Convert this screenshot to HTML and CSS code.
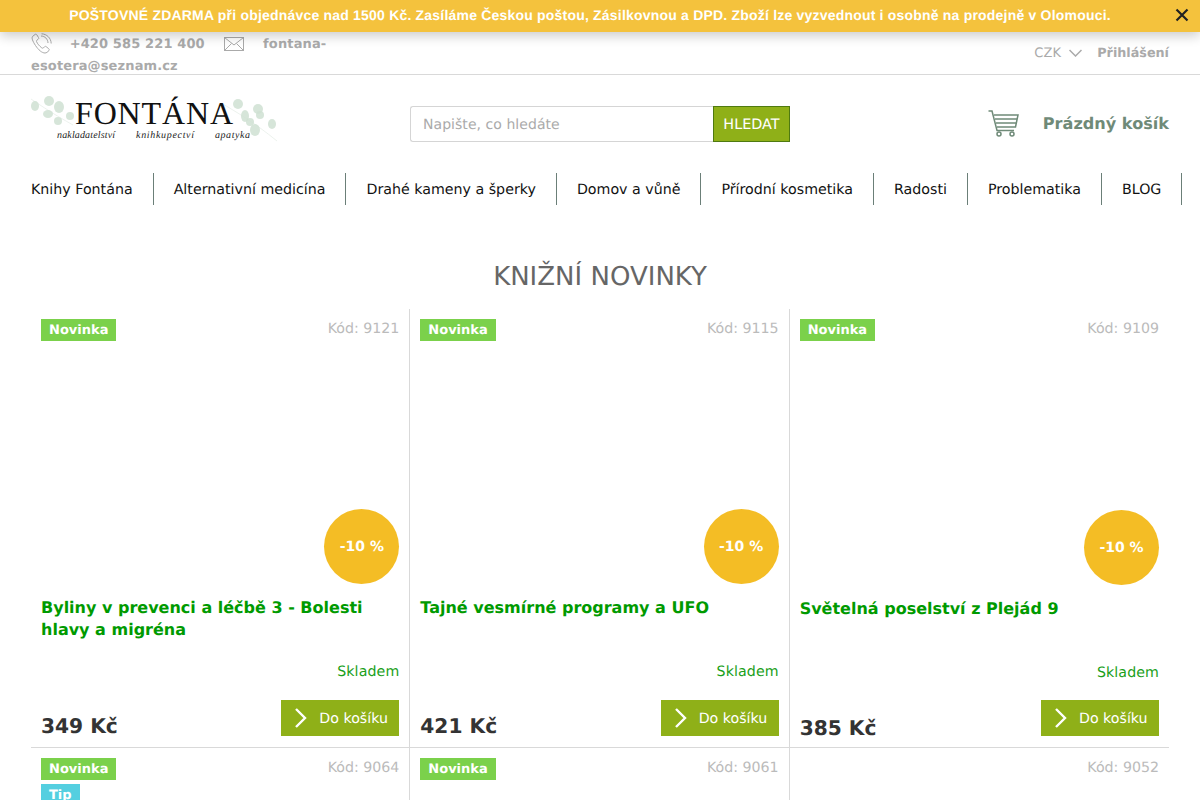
FILE: index.html
```html
<!DOCTYPE html>
<html lang="cs">
<head>
<meta charset="utf-8">
<title>Fontána</title>
<link rel="stylesheet" href="styles.css">
</head>
<body>
<div class="banner">
  <span class="banner-text">POŠTOVNÉ ZDARMA při objednávce nad 1500 Kč. Zasíláme Českou poštou, Zásilkovnou a DPD. Zboží lze vyzvednout i osobně na prodejně v Olomouci.</span>
  <svg class="banner-close" width="14" height="14" viewBox="0 0 14 14"><path d="M1.500 1.500l11 11M12.500 1.500l-11 11" stroke="#222" stroke-width="2.200" fill="none"/></svg>
</div>
<div class="topbar">
  <div class="contact">
    <svg class="ico-phone" width="21" height="21" viewBox="0 0 21 21" fill="none" stroke="#aaa" stroke-width="1"><path d="M4 1.500L1.500 3.500C.5 5 1.500 8 4.500 12.500C7.500 17 11 20 14 20c1.500 0 2.500-1 4-2.500.5-.7.3-1.300-.3-1.800l-2.500-2c-.7-.5-1.200-.4-1.800.2l-1 1c-.5.4-1 .4-1.600 0-2.500-2-4.300-4-5.300-6.400-.2-.6 0-1 .5-1.400l1.200-.9c.6-.5.7-1 .3-1.700L5.800 1.800C5.300 1.100 4.700 1 4 1.500z"/><path d="M10 3c4 .2 6.800 3 7 7M10.500 .8c5.300.2 9.500 4.200 9.700 9.700"/></svg>
    <span class="phone">+420 585 221 400</span>
    <svg class="ico-mail" width="20" height="14" viewBox="0 0 20 14" fill="none" stroke="#aaa" stroke-width="1"><rect x=".5" y=".5" width="19" height="13"/><path d="M.5.500L10 8l9.500-7.500M.5 13.500L7.500 6.500M19.500 13.500L12.500 6.500"/></svg>
    <span class="mail">fontana-</span><span class="mail">esotera@seznam.cz</span>
  </div>
  <div class="account">
    <span class="currency">CZK</span>
    <svg class="ico-chev" width="13" height="8" viewBox="0 0 13 8" fill="none" stroke="#aaa" stroke-width="1.500"><path d="M.5 1l6 6 6-6"/></svg>
    <span class="login">Přihlášení</span>
  </div>
</div>
<header class="header">
  <svg class="logo" width="247" height="50" viewBox="0 0 247 50">
    <g fill="none" stroke="#e4ece5" stroke-width=".7">
      <path d="M0 4C12 12 24 20 42 30M190 8c14 8 34 20 56 38"/>
    </g>
    <g fill="#cfe0d2" fill-opacity=".85">
      <ellipse cx="4" cy="11" rx="4" ry="5"/><ellipse cx="18" cy="6" rx="5" ry="5"/><ellipse cx="28" cy="12" rx="5" ry="6"/><ellipse cx="17" cy="19" rx="5" ry="4"/><ellipse cx="27" cy="26" rx="4" ry="4"/><ellipse cx="39" cy="21" rx="4" ry="4"/>
      <ellipse cx="207" cy="9" rx="5" ry="5"/><ellipse cx="227" cy="14" rx="5" ry="5"/><ellipse cx="214" cy="21" rx="4" ry="6"/><ellipse cx="229" cy="20" rx="4" ry="4"/><ellipse cx="224" cy="35" rx="5" ry="6"/><ellipse cx="241" cy="29" rx="4" ry="5"/><ellipse cx="219" cy="27" rx="4" ry="4"/>
    </g>
    <text class="logo-name" x="44" y="29">FONTÁNA</text>
    <text class="logo-sub" x="26" y="43" textLength="58">nakladatelství</text>
    <text class="logo-sub" x="105" y="43" textLength="58">knihkupectví</text>
    <text class="logo-sub" x="184" y="43" textLength="35">apatyka</text>
  </svg>
  <form class="search">
    <span class="search-input">Napište, co hledáte</span>
    <span class="search-btn">HLEDAT</span>
  </form>
  <div class="cart">
    <svg class="ico-cart" width="31" height="27" viewBox="0 0 31 27" fill="none" stroke="#6f8a78" stroke-width="1.500"><path d="M.5 1H4l5 19.500h17"/><path d="M6 5h24l-2.500 12H9M7 9h22M8 13h20"/><circle cx="11" cy="24" r="2"/><circle cx="24" cy="24" r="2"/></svg>
    <span class="cart-text">Prázdný košík</span>
  </div>
</header>
<nav class="nav">
  <a class="nav-item">Knihy Fontána</a>
  <a class="nav-item">Alternativní medicína</a>
  <a class="nav-item">Drahé kameny a šperky</a>
  <a class="nav-item">Domov a vůně</a>
  <a class="nav-item">Přírodní kosmetika</a>
  <a class="nav-item">Radosti</a>
  <a class="nav-item">Problematika</a>
  <a class="nav-item">BLOG</a>
</nav>
<main class="main">
  <h2 class="section-title">KNIŽNÍ NOVINKY</h2>
  <div class="grid">
    <article class="card">
      <div class="card-top"><div class="flags"><span class="flag flag-new">Novinka</span></div><span class="code">Kód: 9121</span></div>
      <div class="card-image"><span class="discount">-10 %</span></div>
      <h3 class="card-title">Byliny v prevenci a léčbě 3 - Bolesti hlavy a migréna</h3>
      <div class="stock">Skladem</div>
      <div class="card-foot"><span class="price">349 Kč</span><a class="buy"><svg width="14" height="20" viewBox="0 0 14 20" fill="none" stroke="#fff" stroke-width="2.400"><path d="M2 1l9 9-9 9"/></svg>Do košíku</a></div>
    </article>
    <article class="card">
      <div class="card-top"><div class="flags"><span class="flag flag-new">Novinka</span></div><span class="code">Kód: 9115</span></div>
      <div class="card-image"><span class="discount">-10 %</span></div>
      <h3 class="card-title">Tajné vesmírné programy a UFO</h3>
      <div class="stock">Skladem</div>
      <div class="card-foot"><span class="price">421 Kč</span><a class="buy"><svg width="14" height="20" viewBox="0 0 14 20" fill="none" stroke="#fff" stroke-width="2.400"><path d="M2 1l9 9-9 9"/></svg>Do košíku</a></div>
    </article>
    <article class="card card-shift">
      <div class="card-top"><div class="flags"><span class="flag flag-new">Novinka</span></div><span class="code">Kód: 9109</span></div>
      <div class="card-image"><span class="discount">-10 %</span></div>
      <h3 class="card-title">Světelná poselství z Plejád 9</h3>
      <div class="stock">Skladem</div>
      <div class="card-foot"><span class="price">385 Kč</span><a class="buy"><svg width="14" height="20" viewBox="0 0 14 20" fill="none" stroke="#fff" stroke-width="2.400"><path d="M2 1l9 9-9 9"/></svg>Do košíku</a></div>
    </article>
    <article class="card">
      <div class="card-top"><div class="flags"><span class="flag flag-new">Novinka</span><span class="flag flag-tip">Tip</span></div><span class="code">Kód: 9064</span></div>
    </article>
    <article class="card">
      <div class="card-top"><div class="flags"><span class="flag flag-new">Novinka</span></div><span class="code">Kód: 9061</span></div>
    </article>
    <article class="card">
      <div class="card-top"><div class="flags"></div><span class="code">Kód: 9052</span></div>
    </article>
  </div>
</main>
</body>
</html>
```
FILE: styles.css
```css
* { box-sizing: border-box; }
html, body { margin: 0; padding: 0; height: 800px; overflow: hidden; }
body { font-family: "DejaVu Sans", sans-serif; background: #fff; color: #333; text-rendering: geometricPrecision; }

.banner { position: relative; z-index: 2; height: 32px; padding-right: 20px; background: #f4c23d; box-shadow: 0 4px 12px rgba(0,0,0,.2); display: flex; align-items: center; justify-content: center; }
.banner-text { font-family: "Liberation Sans", sans-serif; font-weight: 700; font-size: 14px; letter-spacing: .2px; color: #fff; margin-top: -3px; white-space: nowrap; }
.banner-close { position: absolute; left: 1175px; top: 8px; }

.topbar { height: 43px; padding: 0 31px; border-bottom: 1px solid #d9d9d9; display: flex; justify-content: space-between; }
.contact { width: 320px; padding-top: 1px; font-size: 13px; font-weight: 700; line-height: 22px; color: #aaa; letter-spacing: .13px; }
.ico-phone { vertical-align: -6px; margin-right: 13px; }
.ico-mail { vertical-align: -3px; margin: 0 14px 0 15px; }
.account { display: flex; align-items: center; height: 44px; font-size: 13px; color: #aaa; margin-top: -1px; }
.currency { letter-spacing: .2px; }
.ico-chev { margin: 0 15px 0 8px; }
.login { font-weight: 700; font-size: 12.750px; }

.header { height: 98px; padding: 0 31px; display: flex; align-items: center; position: relative; }
.logo { display: block; margin-top: -8px; margin-right: 132px; flex: none; }
.logo-name { font-family: "Liberation Serif", serif; font-size: 32px; fill: #111; letter-spacing: .85px; }
.logo-sub { font-family: "Liberation Serif", serif; font-style: italic; font-size: 10px; fill: #222; }
.search { display: flex; width: 380px; height: 36px; margin-top: -1px; }
.search-input { flex: 1; border: 1px solid #d5d5d5; border-right: 0; border-radius: 3px 0 0 3px; padding: 1px 12px 0; font-size: 14px; line-height: 34px; color: #aaa; letter-spacing: .05px; }
.search-btn { width: 77px; padding-top: 1px; background: #8fb018; border: 1px solid #4f7a10; color: #fff; font-size: 14.400px; line-height: 34px; text-align: center; }
.cart { margin-left: auto; display: flex; align-items: center; margin-top: -1px; }
.ico-cart { margin-right: 24px; }
.cart-text { font-size: 16.100px; font-weight: 700; color: #6f8a78; }

.nav { display: flex; padding: 0 0 0 31px; height: 32px; }
.nav-item { display: block; height: 32px; padding: 1px 20px 0; border-right: 1px solid #6b7f78; font-size: 14.230px; line-height: 32px; color: #111; white-space: nowrap; }
.nav-item:first-child { padding-left: 0; }

.main { padding: 0 31px; }
.section-title { margin: 57px 0 0; height: 47px; text-align: center; font-size: 26px; font-weight: 400; line-height: 30px; color: #666; }
.grid { display: grid; grid-template-columns: repeat(3, 1fr); }
.card { height: 439px; padding: 10px; border-right: 1px solid #d9d9d9; border-bottom: 1px solid #d9d9d9; }
.card:nth-child(3n) { border-right: 0; }
.card-top { display: flex; justify-content: space-between; align-items: flex-start; height: 40px; }
.flags { display: flex; flex-direction: column; align-items: flex-start; gap: 4px; }
.flag { display: block; height: 22px; padding: 1px 8px 0; font-size: 13px; font-weight: 700; line-height: 22px; color: #fff; }
.flag-new { background: #7bd14b; }
.flag-tip { background: #54cfe0; }
.code { padding-top: 1px; font-size: 14.200px; line-height: 18px; color: #bbb; }
.card-image { position: relative; height: 225px; }
.card-shift .card-image { height: 226px; }
.card-shift .card-foot { margin-top: 19px; }
.card-shift .price { margin-top: 15px; }
.discount { position: absolute; right: 0; bottom: 0; width: 75px; height: 75px; padding-top: 1px; border-radius: 50%; background: #f4bd25; color: #fff; font-size: 14px; font-weight: 700; line-height: 75px; text-align: center; }
.card-title { margin: 13px 0 0; height: 44px; font-size: 16px; font-weight: 700; line-height: 22px; color: #009a00; }
.stock { margin-top: 21px; padding-top: 1px; height: 18px; font-size: 14.200px; letter-spacing: .1px; line-height: 18px; color: #1aa01a; text-align: right; }
.card-foot { display: flex; justify-content: space-between; align-items: flex-start; margin-top: 20px; }
.price { margin-top: 13px; font-size: 20.200px; font-weight: 700; line-height: 26px; color: #333; }
.buy { display: flex; align-items: center; width: 118px; height: 36px; padding: 1px 0 0 13px; background: #8fb018; color: #fff; font-size: 14.200px; }
.buy svg { margin-right: 11px; margin-top: -1px; }
```
